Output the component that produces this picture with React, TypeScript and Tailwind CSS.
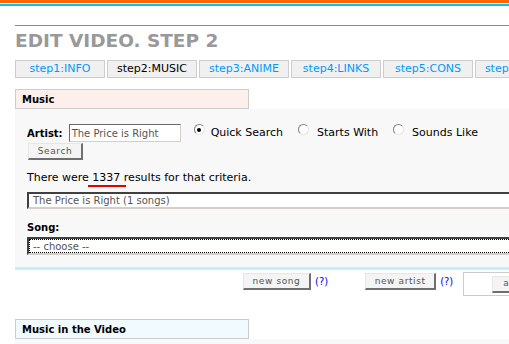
import React from "react";

const tabs = [
  { label: "step1:INFO", active: false },
  { label: "step2:MUSIC", active: true },
  { label: "step3:ANIME", active: false },
  { label: "step4:LINKS", active: false },
  { label: "step5:CONS", active: false },
  { label: "step6:EXTRA", active: false },
];

function Radio({ checked }: { checked?: boolean }) {
  return (
    <span className="-mt-[7px] inline-flex h-[11px] w-[11px] shrink-0 items-center justify-center rounded-full border border-t-[#808080] border-l-[#808080] border-r-[#e4e4e4] border-b-[#e4e4e4] bg-white">
      {checked && <span className="h-[4px] w-[4px] rounded-full bg-black" />}
    </span>
  );
}

function OldButton({ children, className = "" }: { children: React.ReactNode; className?: string }) {
  return (
    <button
      className={
        "flex h-[17px] items-center justify-center border-t border-l border-r-2 border-b-2 border-t-[#e6e6e6] border-l-[#e6e6e6] border-r-[#6f6f6f] border-b-[#6f6f6f] bg-[#f4f4f4] text-[9px] leading-none tracking-[0.6px] text-[#555] " +
        className
      }
    >
      {children}
    </button>
  );
}

export default function App() {
  return (
    <div className="h-[344px] w-[509px] overflow-hidden bg-white font-['DejaVu_Sans',sans-serif] text-[11px] text-black">
      <div className="h-[3px] bg-[#ff6600]" />
      <div className="mt-[1px] h-[2px] bg-[#00c0ff]" />

      <div className="ml-[15px] w-[760px]">
        <div className="mt-[19px] border-t border-[#ff6600]" />
        <h1 className="mt-[3px] font-['DejaVu_Sans',sans-serif] text-[18.5px] leading-[24px] font-bold text-[#999]">
          EDIT VIDEO. STEP 2
        </h1>

        {/* tabs */}
        <div className="mt-[7px] flex gap-[2px]">
          {tabs.map((t) => (
            <div
              key={t.label}
              className={
                "flex h-[18px] w-[90px] items-center justify-center border border-[#cccccc] bg-[#f0f0f0] text-[11px] " +
                (t.active ? "text-black" : "text-[#0099ff]")
              }
            >
              {t.label}
            </div>
          ))}
        </div>

        {/* Music section */}
        <div className="mt-[11px] flex h-[20px] w-[234px] items-center border border-[#cccccc] bg-[#fdf0ec] pl-[6px] text-[10px] font-bold">
          Music
        </div>
        <div className="border-b-[3px] border-[#c4eefc] bg-[#f8f8f8] pb-[12px] pl-[12px] text-[10px]">
          <div className="flex items-center pt-[15px]">
            <span className="font-bold">Artist:</span>
            <div className="ml-[6px] flex h-[18px] w-[112px] items-center border border-t-[#6a6a6a] border-l-[#6a6a6a] border-r-[#d4d0c8] border-b-[#d4d0c8] bg-white pl-[2px] text-[#555]">
              The Price is Right
            </div>
            <div className="ml-[13px] flex items-center gap-[6px] text-[11px]">
              <Radio checked />
              <span>Quick Search</span>
            </div>
            <div className="ml-[15px] flex items-center gap-[8px] text-[11px]">
              <Radio />
              <span>Starts With</span>
            </div>
            <div className="ml-[15px] flex items-center gap-[8px] text-[11px]">
              <Radio />
              <span>Sounds Like</span>
            </div>
          </div>
          <OldButton className="mt-[1px] ml-[1px] w-[55px]">Search</OldButton>

          <p className="mt-[11px] text-[11px] leading-[13px]">
            There were{" "}
            <span className="-mr-[6px] -ml-[4px] border-b-2 border-[#e00000] pr-[6px] pb-[1px] pl-[4px]">
              1337
            </span>{" "}
            results for that criteria.
          </p>

          <div className="mt-[8px] flex h-[17px] items-center border-2 border-t-[#404040] border-l-[#404040] border-r-[#d4d0c8] border-b-[#d4d0c8] bg-white pl-[4px] text-[#555]">
            The Price is Right (1 songs)
          </div>

          <div className="mt-[11px] font-bold">Song:</div>
          <div className="mt-[2px] h-[18px] border-2 border-t-[#404040] border-l-[#404040] border-r-[#d4d0c8] border-b-[#d4d0c8] bg-white">
            <div className="flex h-full items-center border border-dotted border-black pl-[3px] text-[#555]">
              -- choose --
            </div>
          </div>
        </div>

        {/* action row */}
        <div className="mt-[3px] flex items-start">
          <OldButton className="ml-[228px] w-[68px]">new song</OldButton>
          <span className="mt-[1px] ml-[4px] text-[10px] text-[#0000ee]">(?)</span>
          <OldButton className="ml-[37px] w-[71px]">new artist</OldButton>
          <span className="mt-[1px] ml-[4px] text-[10px] text-[#0000ee]">(?)</span>
          <div className="-mt-[1px] ml-[10px] flex h-[24px] w-[80px] items-center border border-[#cccccc] pl-[28px]">
            <OldButton className="w-[50px] justify-start pl-[10px]">add</OldButton>
          </div>
        </div>

        {/* Music in the Video */}
        <div className="mt-[23px] flex h-[20px] w-[234px] items-center border border-[#cccccc] bg-[#f0faff] pl-[6px] text-[10px] font-bold">
          Music in the Video
        </div>
        <div className="h-[40px] bg-[#f8f8f8]" />
      </div>
    </div>
  );
}
